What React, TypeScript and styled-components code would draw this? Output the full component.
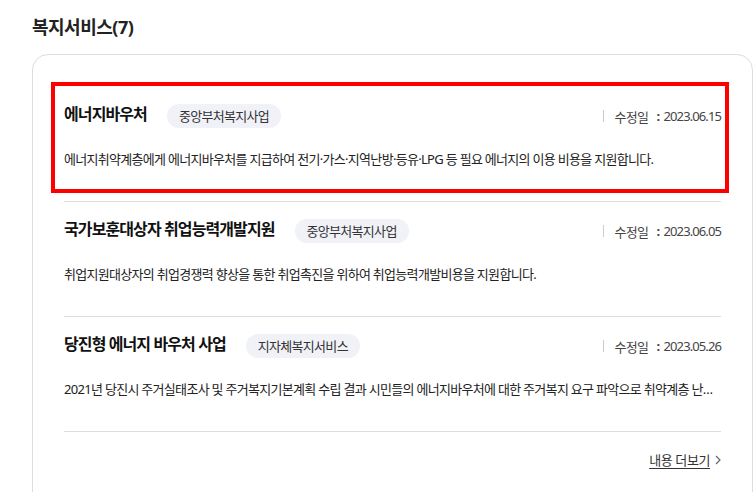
import styled, { createGlobalStyle } from "styled-components"

const GlobalStyle = createGlobalStyle`
    body {
        margin: 0;
        background: #fff;
        font-family: "Noto Sans", "Noto Sans CJK KR", sans-serif;
        color: #222;
    }
`

const Page = styled.div`
    padding: 15px 0 0 32px;
    width: 753px;
    height: 492px;
    box-sizing: border-box;
    overflow: hidden;
`

const SectionTitle = styled.h2`
    margin: 0 0 15px;
    font-size: 18px;
    line-height: 24px;
    font-weight: 700;
    color: #222;
    letter-spacing: -0.5px;
`

const Card = styled.div`
    width: 721px;
    box-sizing: border-box;
    border: 1px solid #ddd;
    border-radius: 16px;
    padding: 32px 31px 40px;
`

const List = styled.ul`
    list-style: none;
    margin: 0;
    padding: 0;
`

const Item = styled.li`
    position: relative;
    padding: 17px 0 32px;
    border-bottom: 1px solid #ddd;
`

const Highlight = styled.span`
    position: absolute;
    top: -5px;
    left: -13px;
    right: -8px;
    bottom: 8px;
    border: 4px solid #ff0000;
    pointer-events: none;
`

const ItemHead = styled.div`
    display: flex;
    align-items: flex-start;
    height: 24px;
`

const ItemTitle = styled.strong`
    font-size: 16px;
    line-height: 20px;
    font-weight: 700;
    color: #111;
    letter-spacing: -0.9px;
`

const Badge = styled.span`
    margin-left: 20px;
    height: 24px;
    padding: 0 12px;
    border-radius: 12px;
    background: #f1f1f8;
    font-size: 13px;
    line-height: 24px;
    color: #333;
    letter-spacing: -0.7px;
`

const Modified = styled.span`
    margin-left: auto;
    display: flex;
    align-items: center;
    height: 24px;
    font-size: 13px;
    color: #444;
    letter-spacing: -0.6px;

    &::before {
        content: "";
        width: 1px;
        height: 12px;
        background: #ccc;
        margin-right: 10px;
    }
`

const Colon = styled.span`
    margin: 0 4px 0 8px;
    font-weight: 700;
`

const DateText = styled.span`
    letter-spacing: -0.9px;
`

const Desc = styled.p`
    margin: 21px 0 0;
    font-size: 13px;
    line-height: 20px;
    color: #222;
    letter-spacing: -0.7px;
    white-space: nowrap;
    overflow: hidden;
    text-overflow: ellipsis;
`

const More = styled.div`
    display: flex;
    justify-content: flex-end;
    margin-top: 18px;
`

const MoreLink = styled.a`
    display: flex;
    align-items: center;
    gap: 5px;
    font-size: 13px;
    line-height: 20px;
    color: #333;
    letter-spacing: -0.4px;
    text-decoration: none;

    span {
        text-decoration: underline;
        text-underline-offset: 3px;
    }
`

const items = [
    {
        title: "에너지바우처",
        badge: "중앙부처복지사업",
        date: "2023.06.15",
        desc: "에너지취약계층에게 에너지바우처를 지급하여 전기·가스·지역난방·등유·LPG 등 필요 에너지의 이용 비용을 지원합니다.",
        highlight: true,
    },
    {
        title: "국가보훈대상자 취업능력개발지원",
        badge: "중앙부처복지사업",
        date: "2023.06.05",
        desc: "취업지원대상자의 취업경쟁력 향상을 통한 취업촉진을 위하여 취업능력개발비용을 지원합니다.",
    },
    {
        title: "당진형 에너지 바우처 사업",
        badge: "지자체복지서비스",
        date: "2023.05.26",
        desc: "2021년 당진시 주거실태조사 및 주거복지기본계획 수립 결과 시민들의 에너지바우처에 대한 주거복지 요구 파악으로 취약계층 난방비 지원을 위한 에너지 바우처 사업을 추진합니다.",
    },
]

const App = () => {
    return (
        <Page>
            <GlobalStyle />
            <SectionTitle>복지서비스(7)</SectionTitle>
            <Card>
                <List>
                    {items.map((item) => (
                        <Item key={item.title}>
                            {item.highlight && <Highlight />}
                            <ItemHead>
                                <ItemTitle>{item.title}</ItemTitle>
                                <Badge>{item.badge}</Badge>
                                <Modified>
                                    수정일<Colon>:</Colon>
                                    <DateText>{item.date}</DateText>
                                </Modified>
                            </ItemHead>
                            <Desc>{item.desc}</Desc>
                        </Item>
                    ))}
                </List>
                <More>
                    <MoreLink href="#">
                        <span>내용 더보기</span>
                        <svg width="6" height="10" viewBox="0 0 6 10">
                            <path d="M1 1l4 4-4 4" fill="none" stroke="#666" strokeWidth="1.2" />
                        </svg>
                    </MoreLink>
                </More>
            </Card>
        </Page>
    )
}

export default App
